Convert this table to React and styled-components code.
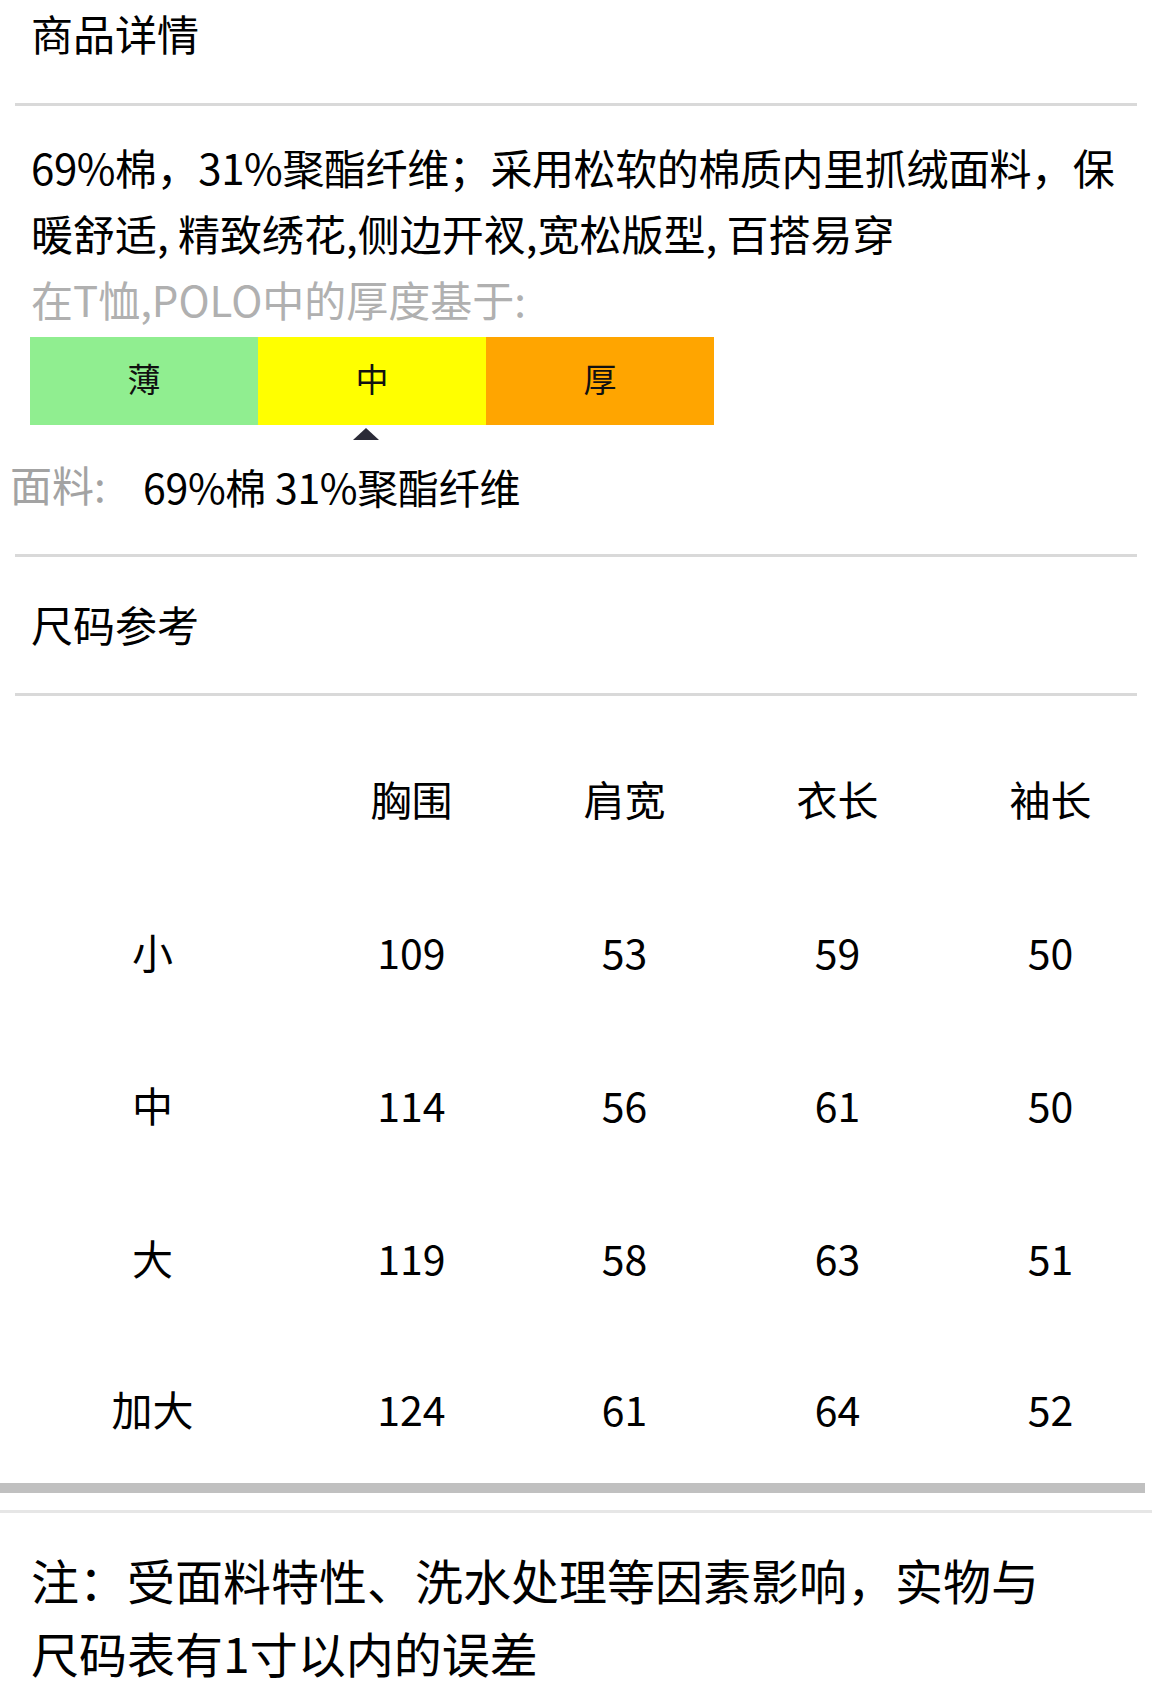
import React from "react";
import styled, { createGlobalStyle } from "styled-components";

const GlobalStyle = createGlobalStyle`
  html, body {
    margin: 0;
    padding: 0;
    background: #fff;
  }
  body {
    font-family: "Noto Sans CJK SC", "Noto Sans", sans-serif;
    color: #000;
    overflow-x: hidden;
  }
`;

const thickness = [
  { label: "薄", color: "#90ee90" },
  { label: "中", color: "#ffff00" },
  { label: "厚", color: "#ffa500" },
];

const columns = ["", "胸围", "肩宽", "衣长", "袖长"];

const sizes = [
  ["小", "109", "53", "59", "50"],
  ["中", "114", "56", "61", "50"],
  ["大", "119", "58", "63", "51"],
  ["加大", "124", "61", "64", "52"],
];

function App() {
  return (
    <Page>
      <GlobalStyle />
      <SectionTitle top={12} bottom={49}>商品详情</SectionTitle>
      <Divider />

      <Description>
        <DescLine tight>69%棉，31%聚酯纤维；采用松软的棉质内里抓绒面料，保</DescLine>
        <DescLine>暖舒适, 精致绣花,侧边开衩,宽松版型, 百搭易穿</DescLine>
        <DescLine muted>在T恤,POLO中的厚度基于:</DescLine>
      </Description>

      <Scale>
        {thickness.map((t) => (
          <Segment key={t.label} color={t.color}>
            {t.label}
          </Segment>
        ))}
      </Scale>
      <PointerTrack>
        <Pointer />
      </PointerTrack>

      <FabricRow>
        <FabricLabel>面料:</FabricLabel>
        <FabricValue>69%棉 31%聚酯纤维</FabricValue>
      </FabricRow>

      <Divider />
      <SectionTitle top={46} bottom={48}>尺码参考</SectionTitle>
      <Divider />

      <SizeTable>
        {columns.map((c, i) => (
          <Cell key={"h" + i}>{c}</Cell>
        ))}
        {sizes.map((row) =>
          row.map((v, i) => <Cell key={row[0] + i}>{v}</Cell>)
        )}
      </SizeTable>

      <HeavyRule />
      <ThinRule />

      <Note>
        <NoteLine>注：受面料特性、洗水处理等因素影响，实物与</NoteLine>
        <NoteLine>尺码表有1寸以内的误差</NoteLine>
      </Note>
    </Page>
  );
}

export default App;

const Page = styled.div`
  width: 1152px;
  min-height: 1695px;
  overflow: hidden;
  background: #fff;
`;

const SectionTitle = styled.div`
  padding: ${(p) => p.top}px 0 ${(p) => p.bottom}px 31px;
  font-size: 42px;
  line-height: 42px;
  color: #000;
`;

const Divider = styled.div`
  height: 3px;
  margin: 0 15px;
  background: #d9d9d9;
`;

const Description = styled.div`
  padding: 28px 0 0 31px;
`;

const DescLine = styled.div`
  font-size: 42px;
  line-height: 66px;
  white-space: nowrap;
  letter-spacing: ${(p) => (p.tight ? "-0.4px" : "0")};
  color: ${(p) => (p.muted ? "#b0b0b0" : "#000")};
`;

const Scale = styled.div`
  display: grid;
  grid-template-columns: repeat(3, 228px);
  margin: 5px 0 0 30px;
  height: 88px;
`;

const Segment = styled.div`
  display: flex;
  align-items: center;
  justify-content: center;
  padding-bottom: 6px;
  background: ${(p) => p.color};
  font-size: 33px;
  color: #111;
`;

const PointerTrack = styled.div`
  display: grid;
  grid-template-columns: repeat(3, 228px);
  margin: 3px 0 0 30px;
`;

const Pointer = styled.div`
  grid-column: 2;
  justify-self: center;
  margin-right: 12px;
  width: 0;
  height: 0;
  border-left: 13px solid transparent;
  border-right: 13px solid transparent;
  border-bottom: 12px solid #2b2b38;
`;

const FabricRow = styled.div`
  display: flex;
  align-items: center;
  height: 56px;
  margin: 18px 0 40px;
`;

const FabricLabel = styled.div`
  width: 133px;
  padding-left: 10px;
  margin-top: -5px;
  font-size: 42px;
  color: #a3a3a3;
`;

const FabricValue = styled.div`
  font-size: 41px;
  letter-spacing: -0.3px;
  color: #000;
`;

const SizeTable = styled.div`
  display: grid;
  grid-template-columns: 305px repeat(4, 213px);
  grid-template-rows: repeat(4, 153px) 150px;
  margin-top: 25px;
`;

const Cell = styled.div`
  display: flex;
  align-items: center;
  justify-content: center;
  font-size: 41px;
  color: #000;
`;

const HeavyRule = styled.div`
  width: 1145px;
  height: 10px;
  background: #c0c0c0;
`;

const ThinRule = styled.div`
  height: 3px;
  margin-top: 17px;
  background: #e6e6e6;
`;

const Note = styled.div`
  padding: 30px 0 0 31px;
`;

const NoteLine = styled.div`
  font-size: 48px;
  line-height: 73px;
  white-space: nowrap;
  color: #000;
`;
